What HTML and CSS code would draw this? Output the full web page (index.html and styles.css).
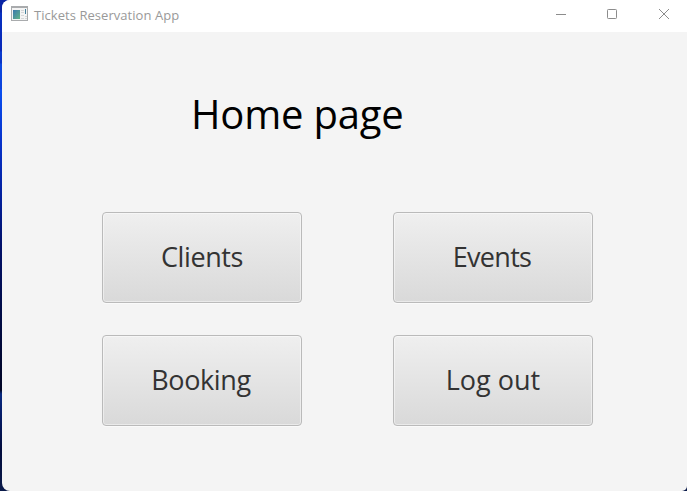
FILE: index.html
```html
<!DOCTYPE html>
<html lang="en">
<head>
<meta charset="utf-8">
<title>Tickets Reservation App</title>
<link rel="stylesheet" href="styles.css">
</head>
<body>
<div class="window">
  <header class="titlebar">
    <svg class="app-icon" width="18" height="16" viewBox="0 0 18 16">
      <defs><linearGradient id="pane" x1="0" y1="0" x2="1" y2="1"><stop offset="0" stop-color="#3c78ad"/><stop offset="1" stop-color="#62b487"/></linearGradient></defs>
      <rect x=".5" y=".5" width="16" height="14" fill="#f4f4f4" stroke="#a9abad"/>
      <path d="M0 1h17" stroke="#a9abad" stroke-width="2"/>
      <path d="M0 14.500h17" stroke="#a9abad"/>
      <rect x="2" y="4" width="7" height="9" fill="url(#pane)"/>
      <path d="M10 4.500h3M10 6.500h3M10 9.500h3M10 12.500h3M14 10.500h2M14 12.500h2" stroke="#d5d7d8"/>
      <path d="M14.500 3v5" stroke="#43809c"/>
    </svg>
    <span class="app-name">Tickets Reservation App</span>
    <nav class="controls">
      <svg width="52" height="32" viewBox="0 0 52 32"><path d="M19 14.500h10"/></svg>
      <svg width="52" height="32" viewBox="0 0 52 32"><rect x="18.500" y="9.500" width="9" height="9" rx=".8"/></svg>
      <svg width="52" height="32" viewBox="0 0 52 32"><path d="M18 9l10 10M28 9l-10 10"/></svg>
    </nav>
  </header>
  <main class="page">
    <h1>Home page</h1>
    <div class="menu">
      <button class="clients"><span>Clients</span></button>
      <button class="events"><span>Events</span></button>
      <button class="booking"><span>Booking</span></button>
      <button class="logout"><span>Log out</span></button>
    </div>
  </main>
</div>
</body>
</html>
```
FILE: styles.css
```css
* { box-sizing: border-box; }
body {
  margin: 0;
  height: 491px;
  padding-left: 2px;
  overflow: hidden;
  background: linear-gradient(#0a25a5 0, #0a25a5 12px, #0831c0 13px, #0828b8 51px, #0b3ccf 52px, #0933c4 63px, #0c49e0 64px, #0c42dc 89px, #0a4ff0 90px, #0733cc 140px, #031f9a 200px, #02116a 245px, #010c48 310px, #010525 390px, #0a2a80 394px, #061c68 415px, #020c3c 450px, #0a1a4a 491px);
  font-family: "Open Sans", "Noto Sans", sans-serif;
}
.window {
  height: 491px;
  border-radius: 8px 0 5px 8px;
  background: #f4f4f4;
  overflow: hidden;
}
.titlebar {
  display: flex;
  height: 32px;
  padding-left: 9px;
  background: #fff;
}
.app-icon { flex: none; margin-top: 6px; }
.app-name {
  margin-left: 5px;
  font-size: 13px;
  line-height: 31px;
  letter-spacing: .05px;
  color: #999;
  white-space: nowrap;
}
.controls {
  display: flex;
  margin-left: auto;
  margin-right: -6px;
}
.controls svg { flex: none; fill: none; stroke: #8c8c8c; }
.page { padding: 52px 94px 0 100px; }
h1 {
  width: 212px;
  margin: 0 0 0 89px;
  font-size: 40px;
  font-weight: 400;
  line-height: 60px;
  letter-spacing: -.2px;
  color: #000;
  white-space: nowrap;
}
.menu {
  display: grid;
  grid-template-columns: 200px 200px;
  grid-auto-rows: 91px;
  gap: 32px 91px;
  margin-top: 68px;
}
button {
  padding: 0;
  border: 1px solid #bababa;
  border-radius: 4px;
  background: linear-gradient(#efefef, #d9d9d9);
  box-shadow: inset 0 0 0 1px rgba(255, 255, 255, .45), 0 1px 0 #fafafa;
  font: 27px/36px "Open Sans", "Noto Sans", sans-serif;
  color: #333;
}
.clients { letter-spacing: -.4px; padding-bottom: 1px; }
.events { letter-spacing: -.7px; padding: 0 2px 1px 0; }
.booking { letter-spacing: -.4px; padding: 0 2px 2px 0; }
.logout { padding-bottom: 2px; }
```
